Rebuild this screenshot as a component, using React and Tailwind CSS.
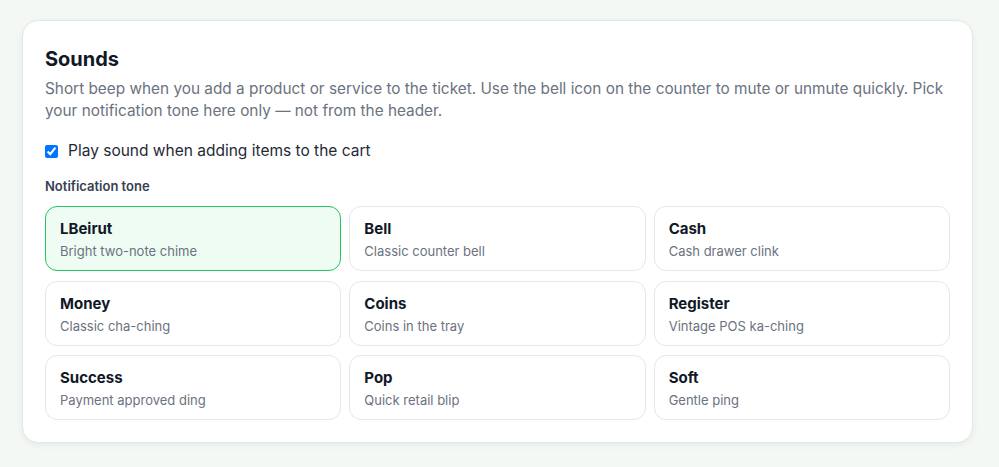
const tones = [
    { name: 'LBeirut', desc: 'Bright two-note chime' },
    { name: 'Bell', desc: 'Classic counter bell' },
    { name: 'Cash', desc: 'Cash drawer clink' },
    { name: 'Money', desc: 'Classic cha-ching' },
    { name: 'Coins', desc: 'Coins in the tray' },
    { name: 'Register', desc: 'Vintage POS ka-ching' },
    { name: 'Success', desc: 'Payment approved ding' },
    { name: 'Pop', desc: 'Quick retail blip' },
    { name: 'Soft', desc: 'Gentle ping' },
];

export default function App() {
    const selected = 'LBeirut';

    return (
        <div className="min-h-[467px] bg-[#f3f8f4] pl-[22px] pt-[20px] font-['Inter',sans-serif]">
            <div className="w-[951px] bg-white border border-[#e3e7e5] rounded-2xl shadow-[0_2px_6px_rgba(0,0,0,0.06)] px-[22px] pt-[24px] pb-[22px]">
                <h2 className="text-[20px] leading-[28px] font-bold text-[#111827]">Sounds</h2>
                <p className="mt-[5px] text-[15.35px] leading-[22px] text-[#6b7280]">
                    Short beep when you add a product or service to the ticket. Use the bell icon on the counter to mute or unmute quickly. Pick your notification tone here only — not from the header.
                </p>

                <label className="mt-[18px] flex items-center gap-[10px] text-[15.5px] leading-[22px] text-[#1f2937]">
                    <input type="checkbox" defaultChecked className="w-[13px] h-[13px] m-0" />
                    Play sound when adding items to the cart
                </label>

                <div className="mt-[15px] text-[13px] leading-[18px] font-semibold text-[#374151]">
                    Notification tone
                </div>

                <div className="mt-[11px] grid grid-cols-3 gap-x-[8px] gap-y-[9.5px]">
                    {tones.map((t) => (
                        <button
                            key={t.name}
                            className={
                                t.name === selected
                                    ? 'text-left rounded-xl border border-[#22c55e] bg-[#effcf3] px-[14px] pt-[12px] pb-[9px]'
                                    : 'text-left rounded-xl border border-[#e5e7eb] bg-white px-[14px] pt-[12px] pb-[9px]'
                            }
                        >
                            <div className="text-[15px] leading-[20px] font-bold text-[#111827]">{t.name}</div>
                            <div className="mt-[2px] text-[13px] leading-[20px] text-[#6b7280]">{t.desc}</div>
                        </button>
                    ))}
                </div>
            </div>
        </div>
    );
}
